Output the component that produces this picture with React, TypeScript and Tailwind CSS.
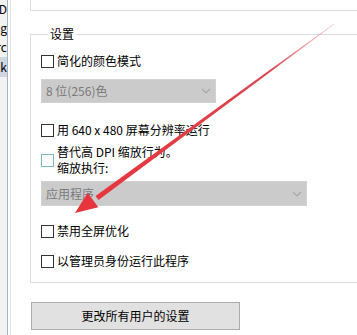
import React from "react";

const font = { fontFamily: '"Noto Sans CJK SC", "Noto Sans", sans-serif' };

function Box({ tint }: { tint?: boolean }) {
  return (
    <span
      className={
        "block w-[13px] h-[13px] shrink-0 bg-white border " +
        (tint ? "border-[#7fb6c0]" : "border-[#333333]")
      }
    />
  );
}

function Check({ label, className }: { label: string; className?: string }) {
  return (
    <div className={"flex items-center h-[16px] gap-[3px] " + (className ?? "")}>
      <Box />
      <span className="text-[12px] leading-[16px] text-black whitespace-nowrap">{label}</span>
    </div>
  );
}

function Chevron() {
  return (
    <svg width="10" height="6" viewBox="0 0 10 6" className="shrink-0">
      <path d="M1 1 L5 5 L9 1" fill="none" stroke="#a8a8a8" strokeWidth="1.2" />
    </svg>
  );
}

export default function App() {
  return (
    <div className="relative w-[357px] h-[335px] overflow-hidden bg-white flex" style={font}>
      {/* left strip */}
      <div className="w-[7px] shrink-0 bg-[#f2f2f2] flex flex-col text-[12px] leading-[16px] text-black overflow-hidden">
        <div className="h-[16px] flex justify-end mt-[1px]"><span className="whitespace-nowrap">ID</span></div>
        <div className="h-[16px] flex justify-end mt-[3px]"><span className="whitespace-nowrap">ag</span></div>
        <div className="h-[16px] flex justify-end mt-[3px]"><span className="whitespace-nowrap">rc</span></div>
        <div className="h-[20px] flex justify-end items-center mt-[2px] bg-[#cfd6de]"><span className="whitespace-nowrap">ck</span></div>
      </div>
      <div className="w-[1px] shrink-0 bg-[#a3b3c4]" />
      <div className="w-[2px] shrink-0 bg-white" />
      <div className="w-[1px] shrink-0 bg-[#e2e2e2]" />

      {/* main */}
      <div className="flex-1 flex flex-col pl-[19px] overflow-hidden">
        <div className="h-[11px] w-[400px] border-l border-b border-[#dcdcdc] rounded-bl-[2px]" />

        <fieldset className="mt-[15px] w-[400px] border border-[#dcdcdc] pl-[10px] pb-[13px]">
          <legend className="ml-[7px] px-[2px] text-[12px] leading-[16px] text-black">设置</legend>

          <Check label="简化的颜色模式" className="mt-[11px]" />

          <div className="mt-[10px] w-[175px] h-[24px] bg-[#cbcbcb] border border-[#d2d2d2] flex items-center justify-between pl-[4px] pr-[4px]">
            <span className="text-[12px] text-[#7a7a7a]">8 位(256)色</span>
            <Chevron />
          </div>

          <Check label="用 640 x 480 屏幕分辨率运行" className="mt-[19px]" />

          <div className="mt-[6px] flex items-center gap-[3px]">
            <Box tint />
            <div className="flex flex-col text-[12px] leading-[16px] text-black">
              <span className="whitespace-nowrap">替代高 DPI 缩放行为。</span>
              <span className="whitespace-nowrap">缩放执行:</span>
            </div>
          </div>

          <div className="mt-[5px] w-[266px] h-[25px] bg-[#cbcbcb] border border-[#d2d2d2] flex items-center justify-between pl-[4px] pr-[4px]">
            <span className="text-[12px] text-[#7a7a7a]">应用程序</span>
            <Chevron />
          </div>

          <Check label="禁用全屏优化" className="mt-[17px]" />
          <Check label="以管理员身份运行此程序" className="mt-[14px]" />
        </fieldset>

        <button className="mt-[19px] ml-[1px] w-[209px] h-[28px] bg-[#e1e1e1] border border-[#adadad] text-[12px] text-black flex items-center justify-center">
          更改所有用户的设置
        </button>
      </div>

      {/* red arrow annotation */}
      <svg className="absolute left-0 top-0 pointer-events-none" width="357" height="335" viewBox="0 0 357 335">
        <defs>
          <linearGradient id="ag" x1="334" y1="24" x2="80" y2="210" gradientUnits="userSpaceOnUse">
            <stop offset="0" stopColor="#e9a0a8" stopOpacity="0.5" />
            <stop offset="0.25" stopColor="#d9444e" />
            <stop offset="1" stopColor="#e8353d" />
          </linearGradient>
        </defs>
        <polygon points="334.3,24.2 333.7,23.8 95.5,195.9 98.5,200.1" fill="url(#ag)" />
        <polygon points="75,213 87.7,192.7 98.3,207.3" fill="#e8353d" />
      </svg>
    </div>
  );
}
